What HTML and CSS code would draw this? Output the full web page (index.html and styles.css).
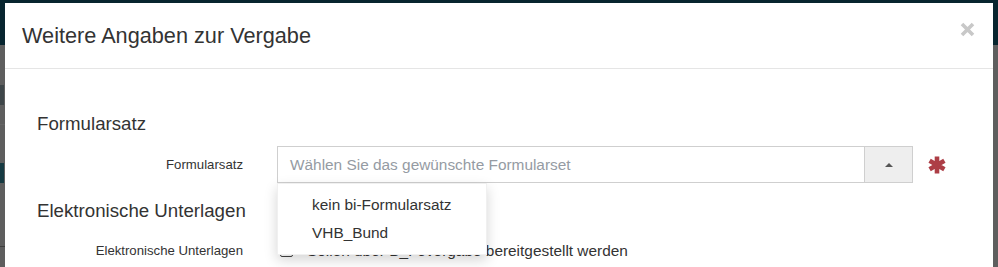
FILE: index.html
```html
<!DOCTYPE html>
<html lang="de">
<head>
<meta charset="utf-8">
<title>Weitere Angaben zur Vergabe</title>
<link rel="stylesheet" href="styles.css">
</head>
<body>
<div class="page">
  <header class="navbar"></header>
  <div class="page-body">
    <div class="side">
      <span class="side-block dotted"></span>
      <span class="side-line"></span>
      <span class="side-block teal"></span>
      <span class="side-line low"></span>
    </div>
  </div>
</div>

<div class="modal">
  <div class="modal-header">
    <h4 class="modal-title">Weitere Angaben zur Vergabe</h4>
    <button class="close" type="button" aria-label="Schließen">
      <svg width="15" height="15" viewBox="0 0 15 15"><path d="M2 2L13 13M13 2L2 13" stroke="#c8c8c8" stroke-width="3.6" stroke-linecap="butt"/></svg>
    </button>
  </div>
  <div class="modal-body">
    <h4 class="section-title">Formularsatz</h4>
    <div class="form-row">
      <label class="control-label">Formularsatz</label>
      <div class="select">
        <div class="select-input">
          <span class="placeholder">Wählen Sie das gewünschte Formularset</span>
          <span class="select-btn"><span class="caret-up"></span></span>
        </div>
        <ul class="dropdown">
          <li>kein bi-Formularsatz</li>
          <li>VHB_Bund</li>
        </ul>
      </div>
      <span class="required">
        <svg width="18" height="18" viewBox="0 0 18 18"><path d="M9 0.5V17.5M1.6 4.75L16.4 13.25M1.6 13.25L16.4 4.75" stroke="#ad3e46" stroke-width="4.6"/></svg>
      </span>
    </div>
    <h4 class="section-title second">Elektronische Unterlagen</h4>
    <div class="form-row">
      <label class="control-label">Elektronische Unterlagen</label>
      <label class="checkbox"><span class="box"><span class="tick"></span></span>Sollen über B_I-evergabe bereitgestellt werden</label>
    </div>
  </div>
</div>
</body>
</html>
```
FILE: styles.css
```css
html, body {
  margin: 0;
  padding: 0;
  height: 100%;
  overflow: hidden;
}

body {
  font-family: "Liberation Sans", Arial, sans-serif;
  color: #333;
  background: #5e5e5e;
}

.page {
  display: flex;
  flex-direction: column;
  height: 100%;
}

.navbar {
  height: 45px;
  background: #07252f;
  flex: none;
}

.page-body {
  flex: 1;
  background: #5e5e5e;
  display: flex;
}

.side {
  width: 5px;
  display: flex;
  flex-direction: column;
}

.side-block {
  display: block;
  height: 20px;
  width: 4px;
}

.side-block.dotted {
  margin-top: 40px;
  background: #3e4649;
}

.side-block.teal {
  margin-top: 38px;
  background: #163a42;
}

.side-line {
  display: block;
  height: 1px;
  margin-top: 19px;
  background: #666;
}

.side-line.low {
  margin-top: 63px;
  background: #3e3e3e;
}

/* modal overlays the page */
.modal {
  position: absolute;
  left: 5px;
  top: 3px;
  width: 988px;
  height: 300px;
  background: #fff;
  overflow: hidden;
}

.modal-header {
  position: relative;
  padding: 15px 17px 15px 17px;
  border-bottom: 1px solid #e5e5e5;
}

.modal-title {
  margin: 0;
  font-size: 21.7px;
  font-weight: normal;
  line-height: 35px;
  color: #333;
}

.close {
  position: absolute;
  right: 18px;
  top: 19px;
  width: 15px;
  height: 15px;
  padding: 0;
  border: 0;
  background: none;
  display: block;
}

.close svg {
  display: block;
}

.modal-body {
  padding: 44px 15px 0 32px;
}

.section-title {
  margin: 0 0 11px;
  font-size: 18.7px;
  font-weight: normal;
  line-height: 22px;
  color: #333;
}

.section-title.second {
  margin-top: 17px;
  margin-bottom: 10px;
}

.form-row {
  display: grid;
  grid-template-columns: 206px 636px 18px;
  column-gap: 34px;
  align-items: center;
  height: 37px;
}

.control-label {
  text-align: right;
  font-size: 13.2px;
  line-height: 16px;
  color: #333;
}

.select {
  position: relative;
}

.select-input {
  box-sizing: border-box;
  height: 37px;
  border: 1px solid #cfcfcf;
  display: flex;
  align-items: stretch;
  background: #fff;
}

.placeholder {
  flex: 1;
  padding-left: 12px;
  font-size: 15.4px;
  line-height: 35px;
  color: #959ba3;
  white-space: nowrap;
}

.select-btn {
  width: 47px;
  border-left: 1px solid #cfcfcf;
  background: #eeeeee;
  display: flex;
  align-items: center;
  justify-content: center;
}

.caret-up {
  width: 0;
  height: 0;
  border-left: 4px solid transparent;
  border-right: 4px solid transparent;
  border-bottom: 4px solid #555;
}

.dropdown {
  position: absolute;
  left: 0;
  top: 100%;
  z-index: 5;
  box-sizing: border-box;
  width: 210px;
  margin: 0;
  padding: 7px 0;
  list-style: none;
  background: #fff;
  border: 1px solid rgba(0, 0, 0, 0.06);
  box-shadow: 0 5px 12px rgba(0, 0, 0, 0.17);
}

.dropdown li {
  padding-left: 34px;
  font-size: 15.4px;
  line-height: 28px;
  color: #333;
  white-space: nowrap;
}

.required {
  display: block;
  width: 18px;
  height: 18px;
  justify-self: start;
  margin-left: -19px;
}

.required svg {
  display: block;
}

.checkbox {
  display: flex;
  align-items: center;
  padding-left: 3px;
  font-size: 15.4px;
  line-height: 20px;
  color: #333;
  white-space: nowrap;
  grid-column: 2 / span 2;
}

.box {
  box-sizing: border-box;
  width: 13px;
  height: 13px;
  border: 1.5px solid #444;
  border-radius: 2px;
  margin-right: 14px;
  display: flex;
  align-items: center;
  justify-content: center;
}

.tick {
  width: 3px;
  height: 5px;
  border-right: 1.5px solid #444;
  border-bottom: 1.5px solid #444;
  transform: rotate(45deg);
  margin-top: -2px;
}
```
